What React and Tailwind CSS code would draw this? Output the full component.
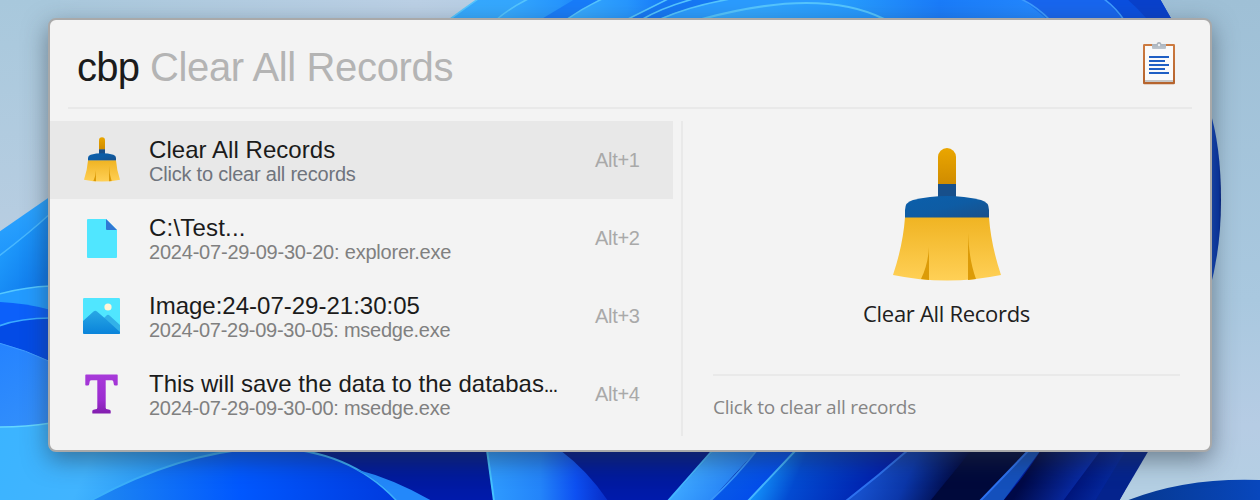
import React from "react";

function Wallpaper() {
  return (
    <svg className="absolute inset-0 h-[500px] w-[1260px]" viewBox="0 0 1260 500" aria-hidden="true">
      <defs>
        <linearGradient id="sky" x1="0" y1="0" x2="1" y2="0">
          <stop offset="0" stopColor="#a8c8dc" /><stop offset=".33" stopColor="#bcd1e6" /><stop offset=".9" stopColor="#9dbfd7" /><stop offset="1" stopColor="#a5c4da" />
        </linearGradient>
        <linearGradient id="skyR" x1="0" y1="0" x2="0" y2="1">
          <stop offset="0" stopColor="#9fc0d6" /><stop offset=".6" stopColor="#a9c8df" /><stop offset=".85" stopColor="#b6cce4" /><stop offset="1" stopColor="#b4cfe3" />
        </linearGradient>
        <linearGradient id="skyL" x1="0" y1="0" x2="0" y2="1">
          <stop offset="0" stopColor="#a8c8dc" /><stop offset="1" stopColor="#bccfe3" />
        </linearGradient>
        <linearGradient id="top" x1="450" y1="0" x2="1170" y2="0" gradientUnits="userSpaceOnUse">
          <stop offset="0" stopColor="#36aaff" /><stop offset=".4" stopColor="#30a0ff" /><stop offset=".75" stopColor="#1c84ff" /><stop offset="1" stopColor="#0a3ed0" />
        </linearGradient>
        <linearGradient id="band" x1="0" y1="0" x2="1" y2="0">
          <stop offset="0" stopColor="#38adff" /><stop offset=".6" stopColor="#2797ff" /><stop offset="1" stopColor="#1477fa" />
        </linearGradient>
        <linearGradient id="arc" x1="705" y1="0" x2="882" y2="0" gradientUnits="userSpaceOnUse">
          <stop offset="0" stopColor="#36abff" /><stop offset="1" stopColor="#2296ff" />
        </linearGradient>
        <linearGradient id="topRight" x1="830" y1="0" x2="1048" y2="0" gradientUnits="userSpaceOnUse">
          <stop offset="0" stopColor="#29a2ff" /><stop offset=".5" stopColor="#1a7cfa" /><stop offset="1" stopColor="#2489ff" />
        </linearGradient>
        <linearGradient id="leftA" x1="0" y1="200" x2="50" y2="300" gradientUnits="userSpaceOnUse">
          <stop offset="0" stopColor="#30a8ff" /><stop offset=".55" stopColor="#1c93fb" /><stop offset="1" stopColor="#0a68e8" />
        </linearGradient>
        <linearGradient id="leftA2" x1="5" y1="240" x2="50" y2="270" gradientUnits="userSpaceOnUse">
          <stop offset="0" stopColor="#1f9cfd" /><stop offset="1" stopColor="#0f7aec" />
        </linearGradient>
        <linearGradient id="leftB" x1="0" y1="345" x2="50" y2="430" gradientUnits="userSpaceOnUse">
          <stop offset="0" stopColor="#2583ff" /><stop offset="1" stopColor="#3490fa" />
        </linearGradient>
        <linearGradient id="cyan" x1="0" y1="420" x2="180" y2="500" gradientUnits="userSpaceOnUse">
          <stop offset="0" stopColor="#3bb4ff" /><stop offset=".5" stopColor="#41b4ff" /><stop offset="1" stopColor="#1e8cf4" />
        </linearGradient>
        <linearGradient id="blueB" x1="100" y1="0" x2="410" y2="0" gradientUnits="userSpaceOnUse">
          <stop offset="0" stopColor="#1d86f2" /><stop offset=".45" stopColor="#0058ff" /><stop offset="1" stopColor="#0038dc" />
        </linearGradient>
        <linearGradient id="navy" x1="0" y1="450" x2="0" y2="500" gradientUnits="userSpaceOnUse">
          <stop offset="0" stopColor="#001a8e" /><stop offset="1" stopColor="#001aac" />
        </linearGradient>
        <linearGradient id="petal" x1="488" y1="0" x2="605" y2="0" gradientUnits="userSpaceOnUse">
          <stop offset="0" stopColor="#2f9cff" /><stop offset=".45" stopColor="#2384fa" /><stop offset=".75" stopColor="#0d50f2" /><stop offset="1" stopColor="#082fca" />
        </linearGradient>
        <linearGradient id="ray" x1="690" y1="475" x2="740" y2="510" gradientUnits="userSpaceOnUse">
          <stop offset="0" stopColor="#3ba4ff" /><stop offset="1" stopColor="#1c72f2" />
        </linearGradient>
        <linearGradient id="ray2" x1="735" y1="465" x2="775" y2="500" gradientUnits="userSpaceOnUse">
          <stop offset="0" stopColor="#075ae8" /><stop offset="1" stopColor="#0046ec" />
        </linearGradient>
        <linearGradient id="ray3" x1="765" y1="470" x2="870" y2="515" gradientUnits="userSpaceOnUse">
          <stop offset="0" stopColor="#128df8" /><stop offset=".28" stopColor="#034bd2" /><stop offset="1" stopColor="#001caa" />
        </linearGradient>
        <linearGradient id="ray4" x1="870" y1="470" x2="945" y2="505" gradientUnits="userSpaceOnUse">
          <stop offset="0" stopColor="#1650cc" /><stop offset=".45" stopColor="#0b37aa" /><stop offset="1" stopColor="#000842" />
        </linearGradient>
        <linearGradient id="ray5" x1="1030" y1="470" x2="1080" y2="500" gradientUnits="userSpaceOnUse">
          <stop offset="0" stopColor="#000947" /><stop offset="1" stopColor="#0930b6" />
        </linearGradient>
        <linearGradient id="ray6" x1="1080" y1="475" x2="1120" y2="500" gradientUnits="userSpaceOnUse">
          <stop offset="0" stopColor="#00157a" /><stop offset="1" stopColor="#0733b4" />
        </linearGradient>
        <linearGradient id="edge" x1="1210" y1="0" x2="1222" y2="0" gradientUnits="userSpaceOnUse">
          <stop offset="0" stopColor="#1048c4" /><stop offset=".7" stopColor="#0634a8" /><stop offset="1" stopColor="#03196c" />
        </linearGradient>
        <linearGradient id="hill" x1="1130" y1="0" x2="1260" y2="0" gradientUnits="userSpaceOnUse">
          <stop offset="0" stopColor="#063890" /><stop offset="1" stopColor="#0847bd" />
        </linearGradient>
      </defs>
      <rect width="1260" height="500" fill="url(#sky)" />
      <rect width="60" height="300" fill="url(#skyL)" />
      <rect x="1180" width="80" height="500" fill="url(#skyR)" />
      <rect x="1100" y="440" width="90" height="60" fill="#b4cfe3" />

      <path d="M448 20Q465 8 478 -1H1160L1172 20Z" fill="url(#top)" />
      <path d="M495 20Q512 8 530 -1H602L565 20Z" fill="url(#band)" />
      <path d="M540 20L575 -1H602L566 20Z" fill="#187cfa" />
      <path d="M567 20Q584 8 602 -1H668L627 20Z" fill="url(#band)" />
      <path d="M627 20L668 -1H735Q680 8 658 20Z" fill="#1678f5" />
      <path d="M658 20Q690 6 730 -1H850L700 20Z" fill="#2b9cff" />
      <path d="M830 20V-1H1022L1048 20Z" fill="url(#topRight)" />
      <path d="M702 19Q820 -13 884 19Z" fill="url(#arc)" />
      <path d="M1050 20Q1036 7 1021 -1H1104L1124 20Z" fill="#1866ef" />
      <path d="M1124 20Q1116 9 1104 -1H1128L1148 20Z" fill="#0a4fe0" />
      <path d="M1148 20Q1138 8 1127 -1H1160L1172 20Z" fill="#0941cc" />
      <g fill="none" stroke="#55c6ff" strokeWidth="1.6">
        <path d="M449 20Q465 8 478 -1M496 20Q510 8 528 -1M566 20Q583 8 602 -1M626 20L668 -1M641 20Q661 8 693 -1M658 20Q690 6 730 -1" />
        <path d="M702 19Q820 -13 884 19" strokeWidth="2.2" />
        <path d="M1021 -1Q1036 6 1050 20M1104 -1Q1116 8 1124 20" stroke="#3e9dff" />
      </g>

      <path d="M1209 108Q1221 145 1221 200Q1221 250 1209 292Z" fill="url(#edge)" />

      <path d="M-1 232L51 196V300H-1Z" fill="url(#leftA)" />
      <path d="M-1 256Q28 234 51 213V300H-1Z" fill="url(#leftA2)" />
      <path d="M-1 256Q28 234 51 213" fill="none" stroke="#48b8ff" strokeWidth="1.5" />
      <path d="M-1 294Q25 287 51 286V315H-1Z" fill="#239bff" />
      <path d="M-1 294Q25 287 51 286" fill="none" stroke="#55c8ff" strokeWidth="1.5" />
      <path d="M-1 302Q25 303 51 310V340H-1Z" fill="#0c60fa" />
      <path d="M-1 326Q20 318 51 318V370H-1Z" fill="#034be6" />
      <path d="M-1 326Q20 318 51 318" fill="none" stroke="#3bacff" strokeWidth="1.5" />
      <path d="M-1 343Q26 350 51 362V430H-1Z" fill="url(#leftB)" />
      <path d="M-1 343Q26 350 51 362" fill="none" stroke="#409dff" />
      <path d="M-1 427Q26 427 51 423V445H370L330 500H-1Z" fill="url(#cyan)" />
      <path d="M-1 427Q26 427 51 423" fill="none" stroke="#65d7ff" strokeWidth="1.7" />

      <path d="M260 448H1148L1119 501H260Z" fill="url(#navy)" />
      <path d="M88 502Q185 449 270 448Q350 449 398 502Z" fill="url(#blueB)" />
      <path d="M88 502Q185 449 270 448Q350 449 398 502" fill="none" stroke="#3bb0fb" strokeWidth="2" />
      <path d="M355 469Q394 479 432 501H398Q378 479 355 469Z" fill="#2388fa" />
      <path d="M487 450H560Q588 471 608 501H494Z" fill="url(#petal)" />
      <path d="M487 450L494 501" stroke="#45c3ff" strokeWidth="2" />
      <path d="M668 501L681 487V501Z" fill="#2ba8fb" />
      <path d="M669 501L714 450H757L710 501Z" fill="url(#ray)" />
      <path d="M710 501Q736 477 757 450H796L748 501Z" fill="url(#ray2)" />
      <path d="M748 501L796 450H910L846 501Z" fill="url(#ray3)" />
      <path d="M846 501Q877 477 908 450H975L930 501Z" fill="url(#ray4)" />
      <path d="M930 501L972 450H1030L980 501Z" fill="#00093b" />
      <path d="M980 501L1029 450H1041L1003 501Z" fill="#1450bc" />
      <path d="M1003 501Q1026 474 1041 450H1102L1063 501Z" fill="url(#ray5)" />
      <path d="M1063 501L1101 450H1128L1095 501Z" fill="url(#ray6)" />
      <path d="M1095 501L1126 450H1149L1119 501Z" fill="#04238d" />
      <g fill="none" strokeWidth="2">
        <path d="M668 501L713 450M748 501L796 450" stroke="#44b5ff" />
        <path d="M710 501Q736 477 757 450" stroke="#3693fa" />
        <path d="M846 501Q877 477 908 450M980 501L1029 450" stroke="#2d71ef" />
      </g>
      <path d="M1126 501Q1185 477 1261 480V501Z" fill="url(#hill)" />
    </svg>
  );
}

function BroomIcon({ className, id }) {
  return (
    <svg className={className} viewBox="0 0 108 133">
      <defs>
        <linearGradient id={id + "h"} x1="0" y1="0" x2="0" y2="1"><stop stopColor="#eaa600" /><stop offset="1" stopColor="#cf8b00" /></linearGradient>
        <linearGradient id={id + "c"} x1="0" y1="0" x2="1" y2="1"><stop stopColor="#0b5fab" /><stop offset=".5" stopColor="#0e5ca4" /><stop offset="1" stopColor="#1a5089" /></linearGradient>
        <linearGradient id={id + "b"} x1="0" y1="0" x2="0" y2="1"><stop stopColor="#f0b423" /><stop offset="1" stopColor="#ffd056" /></linearGradient>
      </defs>
      <path d="M45 37V9A9 9 0 0 1 63 9V37Z" fill={"url(#" + id + "h)"} />
      <path d="M45 36H63V50H45Z" fill="#174f8b" />
      <path d="M12 70V62Q12 54 20 52Q54 44 88 52Q96 54 96 62V70Z" fill={"url(#" + id + "c)"} />
      <path d="M12 69.500H96Q98 97 108 127Q54 138 0 127Q10 97 12 69.500Z" fill={"url(#" + id + "b)"} />
      <path d="M28 131Q35 117 36 99V132Z" fill="#dc9b08" />
      <path d="M75 132V85Q76 112 83 131Z" fill="#dc9b08" />
    </svg>
  );
}

function FileIcon() {
  return (
    <svg className="mt-px h-[39px] w-[30px]" viewBox="0 0 30 39">
      <path d="M1 0H19L30 11V38Q30 39 29 39H1Q0 39 0 38V1Q0 0 1 0Z" fill="#50e6ff" />
      <path d="M19 0L30 11H20Q19 11 19 10Z" fill="#3078d4" />
    </svg>
  );
}

function ImageIcon() {
  return (
    <svg className="h-9 w-[37px]" viewBox="0 0 37 36">
      <defs>
        <linearGradient id="hillFront" x1="0" y1="0" x2="0" y2="1"><stop stopColor="#29a8e5" /><stop offset="1" stopColor="#0a83da" /></linearGradient>
        <clipPath id="imageFrame"><rect width="37" height="36" rx="1.200" /></clipPath>
      </defs>
      <g clipPath="url(#imageFrame)">
        <rect width="37" height="36" fill="#50e6ff" />
        <path d="M18 23L23.500 17.500Q25 16 26.500 17.500L37 27V36H18Z" fill="#32b1e8" />
        <path d="M0 23L10.500 13.500Q12.300 11.800 14 13.500L21 19.500L37 34V36H0Z" fill="url(#hillFront)" />
        <circle cx="25" cy="9" r="3.600" fill="#fff5d8" />
      </g>
    </svg>
  );
}

function TypeIcon() {
  return (
    <svg className="h-10 w-[33px]" viewBox="0 0 33 41" preserveAspectRatio="none">
      <defs><linearGradient id="serif" x1="0" y1="0" x2="0" y2="1"><stop stopColor="#a73ad9" /><stop offset=".65" stopColor="#9c2cd0" /><stop offset="1" stopColor="#821eae" /></linearGradient></defs>
      <path d="M1 .5H32Q32.700 .5 32.700 1.200V11Q32.700 11.700 32 11.700H30.200Q29 11.700 28.800 10.500L28.300 7.700Q28 6.300 26.500 6.300H20.700V34.500Q20.700 36 22.500 36.200L24.500 36.600Q25.700 36.900 25.700 38V40Q25.700 40.600 25 40.600H8Q7.300 40.600 7.300 40V38Q7.300 36.900 8.500 36.600L10.500 36.200Q12.300 36 12.300 34.500V6.300H6.500Q5 6.300 4.700 7.700L4.200 10.500Q4 11.700 2.800 11.700H1Q.3 11.700 .3 11V1.200Q.3 .5 1 .5Z" fill="url(#serif)" />
    </svg>
  );
}

function ClipboardIcon() {
  return (
    <svg className="h-[43px] w-8" viewBox="0 0 32 43">
      <defs>
        <linearGradient id="wood" x1="0" y1="0" x2="0" y2="1"><stop stopColor="#cd7b41" /><stop offset="1" stopColor="#b5632d" /></linearGradient>
        <linearGradient id="clip" x1="0" y1="0" x2="0" y2="1"><stop stopColor="#a4adb7" /><stop offset="1" stopColor="#bdc5ce" /></linearGradient>
      </defs>
      <rect y="2" width="32" height="40.300" rx="1.300" fill="url(#wood)" />
      <rect x="2" y="4" width="28" height="36" fill="#fafafa" />
      <rect x="2" y="38" width="28" height="2" fill="#c6c6c6" />
      <path d="M9 2H13.500Q14 0 16 0T18.500 2H23V6Q23 7 22 7H10Q9 7 9 6Z" fill="url(#clip)" />
      <circle cx="16" cy="3" r="1.200" fill="#eef0f2" />
      <path d="M6 15H26M6 19H22M6 23H26M6 27H22M6 31H26" stroke="#1f5fc4" strokeWidth="2" />
    </svg>
  );
}

const records = [
  { icon: <BroomIcon id="small" className="-mt-px h-[45px] w-9" />, title: "Clear All Records", titleClass: "tracking-[0.05px]", detail: "Click to clear all records", detailClass: "text-[#6f747d] tracking-[-0.22px]", key: "Alt+1", rowClass: "bg-[#e8e8e8]" },
  { icon: <FileIcon />, title: "C:\\Test...", titleClass: "tracking-[0.2px]", detail: "2024-07-29-09-30-20: explorer.exe", detailClass: "text-[#808080] tracking-[-0.21px]", key: "Alt+2", rowClass: "" },
  { icon: <ImageIcon />, title: "Image:24-07-29-21:30:05", titleClass: "tracking-[0px]", detail: "2024-07-29-09-30-05: msedge.exe", detailClass: "text-[#808080] tracking-[-0.25px]", key: "Alt+3", rowClass: "" },
  { icon: <TypeIcon />, title: <>This will save the data to the databas<span className="text-[14px] font-bold leading-none">…</span></>, titleClass: "tracking-[0px]", detail: "2024-07-29-09-30-00: msedge.exe", detailClass: "text-[#808080] tracking-[-0.25px]", key: "Alt+4", rowClass: "" },
];

function Record({ record }) {
  return (
    <li className={"flex h-[78px] w-[623px] items-center " + record.rowClass}>
      <div className="flex w-[103px] shrink-0 justify-center">{record.icon}</div>
      <div className="ml-[-4px] w-[446px] shrink-0 whitespace-nowrap pt-px">
        <div className={"text-[24px] leading-[26px] text-[#1b1b1b] " + record.titleClass}>{record.title}</div>
        <div className={"text-[20px] leading-[22px] " + record.detailClass}>{record.detail}</div>
      </div>
      <div className="whitespace-nowrap text-[20px] leading-6 tracking-[-0.3px] text-[#a9a9a9]">{record.key}</div>
    </li>
  );
}

export default function App() {
  return (
    <div className="relative h-[500px] w-[1260px] overflow-hidden font-['Liberation_Sans',Arial,sans-serif]">
      <Wallpaper />
      <main className="relative ml-12 mt-[18px] flex h-[434px] w-[1164px] flex-col rounded-lg border-2 border-[#a9a9a9] bg-[#f3f3f3] shadow-[0_8px_24px_rgba(40,50,60,0.5)]">
        <header className="mx-[18px] flex h-[89px] shrink-0 justify-between border-b-2 border-[#e9e9e9] pl-[9px] pr-[17px]">
          <div className="flex whitespace-nowrap pt-[24px] text-[40px] leading-[46px]">
            <span className="w-[73px] tracking-[-0.7px] text-[#1b1b1b]">cbp</span>
            <span className="tracking-[-0.35px] text-[#b4b4b4]">Clear All Records</span>
          </div>
          <div className="pt-[22px]"><ClipboardIcon /></div>
        </header>
        <div className="mt-3 flex h-[315px]">
          <ul className="w-[631px] shrink-0">
            {records.map((record) => <Record key={record.key} record={record} />)}
          </ul>
          <section className="flex flex-1 flex-col items-center border-l-2 border-[#e9e9e9] font-['Open_Sans','Noto_Sans',sans-serif]">
            <BroomIcon id="large" className="mt-[27px] h-[133px] w-[108px]" />
            <h1 className="mt-4 whitespace-nowrap text-[22px] leading-8 tracking-[-0.3px] text-[#202020]">Clear All Records</h1>
            <div className="mt-[45px] w-[467px] whitespace-nowrap border-t-2 border-[#e9e9e9] pt-[18px] text-[19px] leading-[26px] tracking-[-0.23px] text-[#858585]">Click to clear all records</div>
          </section>
        </div>
      </main>
    </div>
  );
}
